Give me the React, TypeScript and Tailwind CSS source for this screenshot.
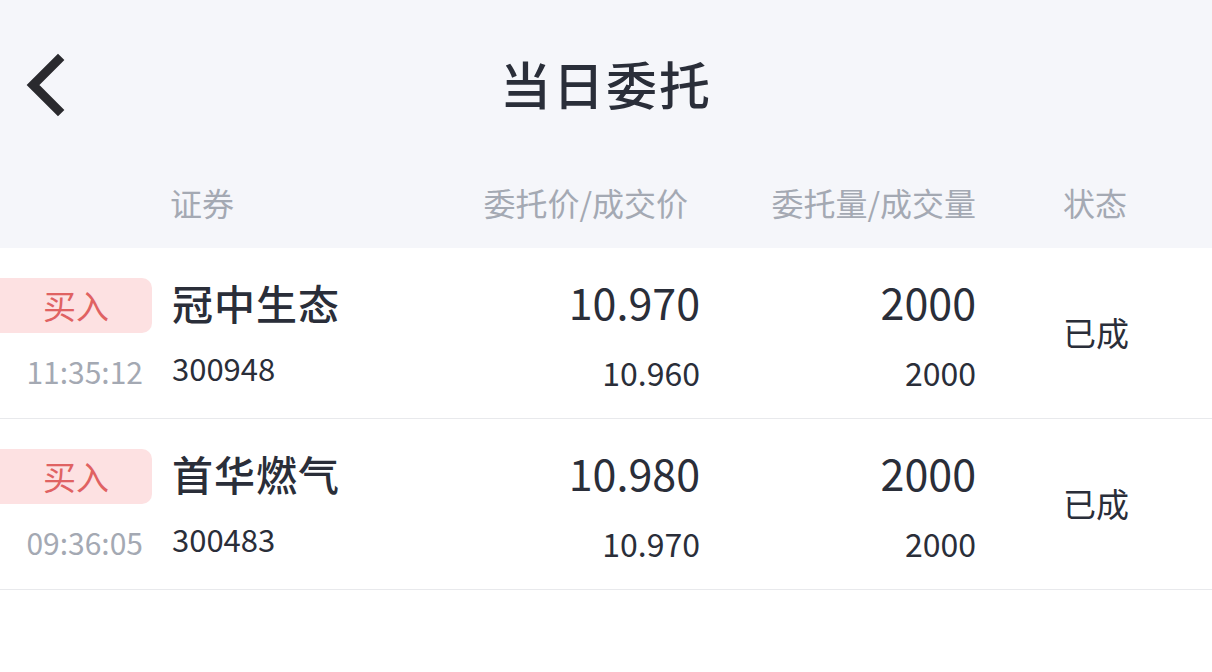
type Order = {
  side: string;
  time: string;
  name: string;
  code: string;
  price: string;
  dealPrice: string;
  qty: string;
  dealQty: string;
  status: string;
};

const ORDERS: Order[] = [
  { side: '买入', time: '11:35:12', name: '冠中生态', code: '300948', price: '10.970', dealPrice: '10.960', qty: '2000', dealQty: '2000', status: '已成' },
  { side: '买入', time: '09:36:05', name: '首华燃气', code: '300483', price: '10.980', dealPrice: '10.970', qty: '2000', dealQty: '2000', status: '已成' },
];

const font = { fontFamily: '"Noto Sans CJK SC", "Noto Sans", sans-serif' };

function BackIcon() {
  return (
    <svg className="absolute left-0 top-0" width="90" height="160" viewBox="0 0 90 160">
      <polyline points="58,60 33,85 58,110" fill="none" stroke="#2a2a2e" strokeWidth="9" strokeLinecap="square" strokeLinejoin="miter" />
    </svg>
  );
}

export default function App() {
  return (
    <div className="w-[1212px] h-[672px] bg-white text-[#2a2e39] overflow-hidden" style={font}>
      {/* Top */}
      <div className="bg-[#f5f6fa]">
        <div className="relative h-[160px] flex items-center justify-center">
          <BackIcon />
          <h1 className="text-[51px] leading-none font-medium tracking-[2px] mt-[6px]">当日委托</h1>
        </div>
        <div className="h-[88px] flex items-center text-[32px] text-[#a4a9b3] pb-[4px]">
          <div className="w-[170px]" />
          <div className="w-[290px]">证券</div>
          <div className="w-[240px] text-right pr-[12px]">委托价/成交价</div>
          <div className="w-[276px] text-right">委托量/成交量</div>
          <div className="ml-[87px]">状态</div>
        </div>
      </div>

      {ORDERS.map((o) => (
        <div key={o.code} className="h-[171px] flex items-center border-b border-[#e8e9ec]">
          <div className="w-[152px] flex flex-col self-start pt-[30px]">
            <div className="h-[55px] bg-[#fde1e2] rounded-r-[10px] flex items-center justify-center text-[33px] text-[#e06262]">
              {o.side}
            </div>
            <div className="mt-[20px] h-[36px] text-[30px] leading-[36px] text-[#a4a9b3] text-right pr-[9px]">{o.time}</div>
          </div>
          <div className="w-[288px] ml-[20px] flex flex-col self-start pt-[30px]">
            <div className="h-[50px] flex items-center text-[41px] font-medium tracking-[1px]">{o.name}</div>
            <div className="mt-[22px] h-[36px] leading-[36px] text-[31px]">{o.code}</div>
          </div>
          <div className="w-[240px] flex flex-col self-start pt-[30px] text-right">
            <div className="h-[46px] flex items-center justify-end text-[43px]">{o.price}</div>
            <div className="mt-[30px] h-[36px] leading-[36px] text-[32px]">{o.dealPrice}</div>
          </div>
          <div className="w-[276px] flex flex-col self-start pt-[30px] text-right">
            <div className="h-[46px] flex items-center justify-end text-[43px]">{o.qty}</div>
            <div className="mt-[30px] h-[36px] leading-[36px] text-[32px]">{o.dealQty}</div>
          </div>
          <div className="ml-[87px] text-[33px]">{o.status}</div>
        </div>
      ))}
    </div>
  );
}
